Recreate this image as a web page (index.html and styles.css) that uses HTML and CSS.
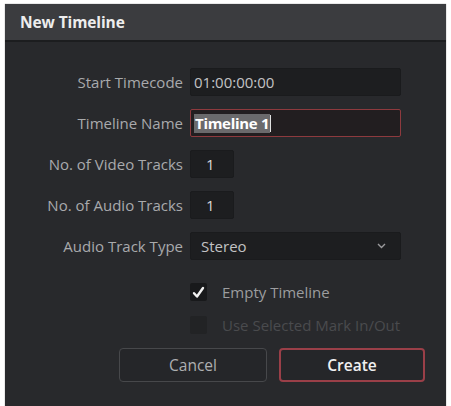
FILE: index.html
```html
<!DOCTYPE html>
<html>
<head>
<meta charset="utf-8">
<link rel="stylesheet" href="styles.css">
</head>
<body>
<div class="dialog">
  <div class="titlebar">New Timeline</div>
  <div class="content">
    <div class="form">
      <label class="lbl">Start Timecode</label>
      <div class="field wide"><span class="val">01:00:00:00</span></div>
      <label class="lbl">Timeline Name</label>
      <div class="field wide focus"><span class="sel">Timeline 1</span><span class="caret"></span></div>
      <label class="lbl">No. of Video Tracks</label>
      <div class="field small"><span class="num">1</span></div>
      <label class="lbl">No. of Audio Tracks</label>
      <div class="field small"><span class="num">1</span></div>
      <label class="lbl">Audio Track Type</label>
      <div class="field wide select"><span class="val">Stereo</span>
        <svg class="chev" width="9" height="6" viewBox="0 0 9 6"><polyline points="1,1 4.5,4.5 8,1" fill="none" stroke="#9a9a9c" stroke-width="1.4"/></svg>
      </div>
    </div>
    <div class="checks">
      <div class="check">
        <span class="box"><svg width="13" height="13" viewBox="0 0 13 13"><path d="M2 7.2 L5 10.5 L11 2" fill="none" stroke="#f2f2f2" stroke-width="2.4" stroke-linecap="round" stroke-linejoin="round"/></svg></span>
        <span class="ctext">Empty Timeline</span>
      </div>
      <div class="check disabled">
        <span class="box"></span>
        <span class="ctext">Use Selected Mark In/Out</span>
      </div>
    </div>
    <div class="buttons">
      <button class="btn cancel">Cancel</button>
      <button class="btn create">Create</button>
    </div>
  </div>
</div>
</body>
</html>
```
FILE: styles.css
```css
html, body {
  margin: 0;
  padding: 0;
  background: #ffffff;
}
body {
  width: 451px;
  height: 406px;
  overflow: hidden;
  font-family: "Open Sans", "Noto Sans", sans-serif;
}
.dialog {
  margin: 4px 0 0 5px;
  width: 441px;
  height: 402px;
  background: #28292c;
  display: flex;
  flex-direction: column;
  box-shadow: 0 0 1px rgba(0,0,0,0.5);
}
.titlebar {
  height: 36px;
  background: #3b3c3f;
  border-bottom: 2px solid #1c1d1f;
  color: #ededed;
  font-weight: 700;
  font-size: 15.5px;
  line-height: 36px;
  padding-left: 15px;
  letter-spacing: -0.1px;
}
.content {
  display: flex;
  flex-direction: column;
  padding-top: 26px;
}
.form {
  display: grid;
  grid-template-columns: 178px 211px;
  column-gap: 7px;
  row-gap: 13px;
  align-items: center;
}
.lbl {
  text-align: right;
  color: #a9aaac;
  font-size: 15px;
  line-height: 28px;
}
.field {
  height: 28px;
  box-sizing: border-box;
  background: #1d1e20;
  border: 1px solid #1a1b1d;
  border-radius: 2px;
  display: flex;
  align-items: center;
  padding-left: 3px;
  color: #c2c2c4;
  font-size: 15px;
}
.small {
  width: 44px;
}
.num {
  padding-left: 12px;
  color: #d8d8d8;
}
.focus {
  border: 1px solid #8e3a3e;
  background: #221e20;
}
.sel {
  background: #6a6a6c;
  color: #ffffff;
  font-weight: 700;
  padding: 0 1px;
  line-height: 19px;
  letter-spacing: -0.3px;
}
.caret {
  width: 1px;
  height: 17px;
  background: #e0e0e0;
}
.select {
  justify-content: space-between;
  padding-left: 10px;
  padding-right: 14px;
}
.checks {
  display: flex;
  flex-direction: column;
  gap: 15px;
  margin-top: 23px;
  padding-left: 185px;
}
.check {
  display: flex;
  align-items: center;
  height: 18px;
}
.box {
  width: 17px;
  height: 18px;
  background: #18191b;
  border-radius: 2px;
  display: flex;
  align-items: center;
  justify-content: center;
}
.ctext {
  margin-left: 15px;
  color: #9c9d9f;
  font-size: 15px;
}
.disabled .box {
  background: #222325;
}
.disabled .ctext {
  color: #4a4b4e;
}
.buttons {
  display: flex;
  justify-content: flex-end;
  gap: 12px;
  margin-top: 14px;
  padding-right: 21px;
}
.btn {
  height: 34px;
  border-radius: 4px;
  background: #252629;
  font-family: "Open Sans", "Noto Sans", sans-serif;
  font-size: 15.5px;
  padding: 0;
}
.cancel {
  width: 148px;
  border: 1px solid #47484b;
  color: #aeafb1;
}
.create {
  width: 146px;
  border: 2px solid #9a3f48;
  color: #f0f0f0;
  font-weight: 600;
}
```
